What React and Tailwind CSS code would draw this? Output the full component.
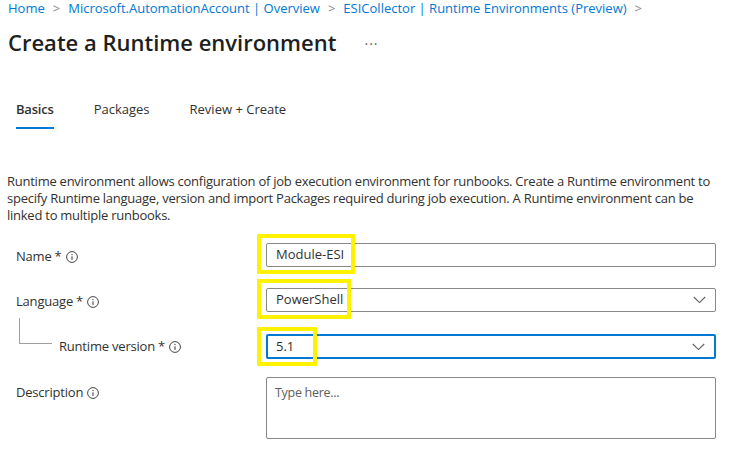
import React from 'react';

function InfoIcon() {
  return (
    <svg width="12" height="12" viewBox="0 0 12 12" className="inline-block ml-[4px]">
      <circle cx="6" cy="6" r="5.4" fill="none" stroke="#323130" strokeWidth="0.9" />
      <circle cx="6" cy="3.6" r="0.7" fill="#323130" />
      <path d="M6 5.3v3.6" stroke="#323130" strokeWidth="1" />
    </svg>
  );
}

function Chevron() {
  return (
    <svg width="13" height="8" viewBox="0 0 13 8" className="absolute right-[9px] top-1/2 -translate-y-1/2">
      <path d="M0.8 1l5.7 5.6L12.2 1" fill="none" stroke="#605e5c" strokeWidth="1.1" />
    </svg>
  );
}

function Highlight({ className }) {
  // yellow annotation box drawn over the field
  return <div className={'absolute border-[4px] border-[#fff200] pointer-events-none ' + className} />;
}

function Label({ text, required }) {
  return (
    <div className="flex items-center text-[13px] text-[#323130] tracking-[-0.2px]">
      <span>{text}</span>
      {required && <span className="ml-[3px]">*</span>}
      <InfoIcon />
    </div>
  );
}

export default function App() {
  return (
    <div className="w-[751px] h-[464px] bg-white overflow-hidden font-['Open_Sans',sans-serif] text-[#323130]">
      {/* Breadcrumb */}
      <div className="flex items-center px-2 h-[17px] text-[13px] leading-[17px] text-[#0078d4]">
        <span>Home</span>
        <span className="mx-[8px] text-[#8a8886]">&gt;</span>
        <span>Microsoft.AutomationAccount | Overview</span>
        <span className="mx-[8px] text-[#8a8886]">&gt;</span>
        <span>ESICollector | Runtime Environments (Preview)</span>
        <span className="ml-[8px] text-[#8a8886]">&gt;</span>
      </div>

      {/* Title */}
      <div className="flex items-center mt-[11px] px-2 h-[28px]">
        <h1 className="text-[22px] font-semibold text-[#201f1e]">Create a Runtime environment</h1>
        <span className="ml-[28px] text-[14px] text-[#605e5c] tracking-[1px] mt-[2px]">···</span>
      </div>

      {/* Tabs */}
      <div className="flex mt-[45px] pl-4 text-[13px] h-[29px]">
        <div className="flex flex-col">
          <span className="font-semibold leading-[17px] tracking-[-0.2px]">Basics</span>
          <div className="mt-[9px] h-[2px] bg-[#0078d4]" />
        </div>
        <span className="ml-[40px] leading-[17px]">Packages</span>
        <span className="ml-[40px] leading-[17px]">Review + Create</span>
      </div>

      {/* Intro */}
      <p className="mt-[43px] pl-[7px] pr-[36px] text-[13px] leading-[17px] tracking-[-0.25px]">
        Runtime environment allows configuration of job execution environment for runbooks. Create a Runtime environment to specify Runtime language, version and import Packages required during job execution. A Runtime environment can be linked to multiple runbooks.
      </p>

      {/* Form */}
      <div className="mt-[19px] pl-4">
        <div className="flex items-center h-[24px]">
          <div className="w-[250px] mt-[4px]"><Label text="Name" required /></div>
          <div className="relative w-[450px] h-[24px] border border-[#8a8886] rounded-[2px] flex items-center px-[9px] text-[13px]">
            Module-ESI
            <Highlight className="-left-[10px] -top-[10px] w-[98px] h-[40px]" />
          </div>
        </div>

        <div className="flex items-center h-[24px] mt-[21px]">
          <div className="w-[250px] mt-[3px]"><Label text="Language" required /></div>
          <div className="relative w-[450px] h-[24px] border border-[#8a8886] rounded-[2px] flex items-center px-[9px] text-[13px]">
            PowerShell
            <Chevron />
            <Highlight className="-left-[10px] -top-[10px] w-[94px] h-[40px]" />
          </div>
        </div>

        <div className="flex items-center h-[25px] mt-[22px]">
          <div className="w-[250px] flex items-center">
            <div className="ml-[3px] -mt-[32px] w-[33px] h-[26px] border-l border-b border-[#a19f9d]" />
            <div className="ml-[7px] mt-[1px]"><Label text="Runtime version" required /></div>
          </div>
          <div className="relative w-[450px] h-[25px] border-2 border-[#0078d4] rounded-[2px] flex items-center px-[8px] text-[13px]">
            5.1
            <Chevron />
            <Highlight className="-left-[11px] -top-[9px] w-[60px] h-[39px]" />
          </div>
        </div>

        <div className="flex items-start mt-[18px]">
          <div className="w-[250px] pt-[6px]"><Label text="Description" /></div>
          <div className="w-[450px] h-[62px] border border-[#8a8886] rounded-[2px] px-[8px] pt-[6px] text-[12.5px] text-[#605e5c] tracking-[-0.3px]">
            Type here...
          </div>
        </div>
      </div>
    </div>
  );
}
